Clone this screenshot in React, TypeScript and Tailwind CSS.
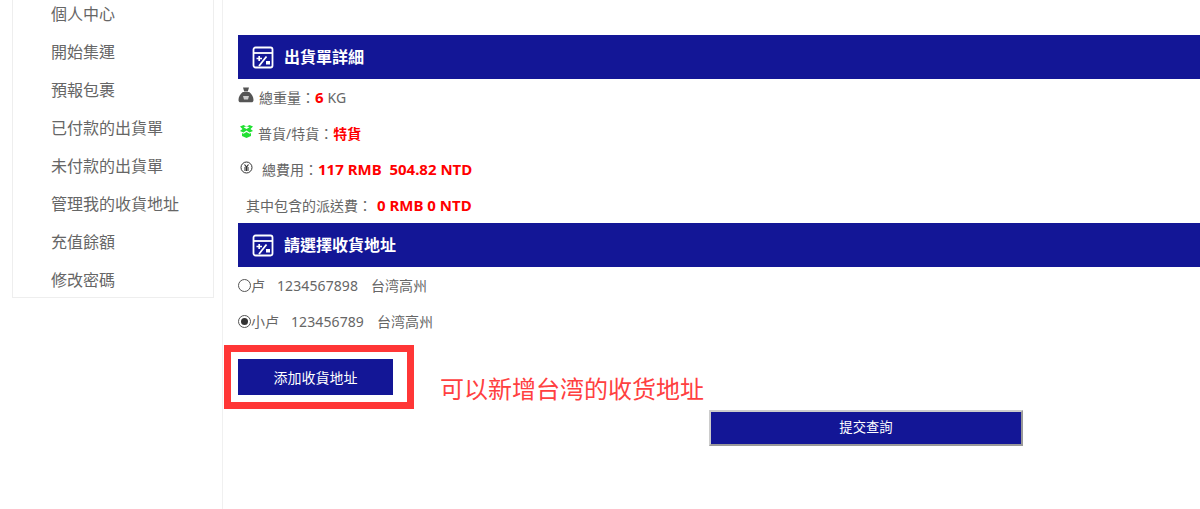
const font = "font-['Noto_Sans','Noto_Sans_CJK_TC',sans-serif]";

function CalcIcon() {
  return (
    <svg width="22" height="23" viewBox="0 0 22 23" fill="none" stroke="#fff" strokeWidth="1.8" className="shrink-0">
      <rect x="1.5" y="1.5" width="19" height="20" rx="2" />
      <path d="M1.5 7H20.500" />
      <path d="M4.500 12.500H10M7.200 10V15" strokeWidth="1.700" />
      <path d="M7 20L14.500 10.500" strokeWidth="1.800" />
      <rect x="14" y="15" width="4" height="3.500" fill="#fff" stroke="none" />
    </svg>
  );
}

function SectionHeader({ title }: { title: string }) {
  return (
    <div className="flex h-11 w-[962px] shrink-0 items-center gap-[10px] bg-[#131696] pl-[14px]">
      <CalcIcon />
      <span className="text-[16px] font-bold text-white">{title}</span>
    </div>
  );
}

const menu = ["個人中心", "開始集運", "預報包裹", "已付款的出貨單", "未付款的出貨單", "管理我的收貨地址", "充值餘額", "修改密碼"];

export default function App() {
  return (
    <div className={`flex h-[509px] w-[1200px] overflow-hidden bg-white text-[14px] text-[#666] ${font}`}>
      <aside className="w-[223px] shrink-0 border-r border-[#f0f0f0] pl-3">
        <ul className="-mt-[6px] h-[304px] w-[202px] border border-[#eeeeee] pl-[38px]">
          {menu.map((m) => (
            <li key={m} className="flex h-[38px] items-center text-[16px] leading-none text-[#666]">{m}</li>
          ))}
        </ul>
      </aside>
      <main className="flex min-w-0 flex-1 flex-col pl-[15px] pt-[35px]">
        <SectionHeader title="出貨單詳細" />
        <div className="flex h-9 items-center">
          <svg width="16" height="16" viewBox="0 0 16 16" className="mb-[4px] shrink-0">
            <path d="M5 .5h6L9.800 4.500H6.200zM4.800 5h6.400c2.800 2 4.300 5 4.300 8 0 1.500-.8 2.300-2.200 2.300H2.700C1.300 15.300.5 14.500.5 13c0-3 1.500-6 4.300-8z" fill="#555" />
            <path d="M5 9h6l-1 3.500H6z" fill="#ccc" />
          </svg>
          <span className="ml-[5px]">總重量：</span>
          <span className="text-[15px] font-bold text-[#ff0000]">6</span>
          <span className="ml-[4px]">KG</span>
        </div>
        <div className="flex h-9 items-center">
          <svg width="13" height="13" viewBox="0 0 13 13" className="mb-[4px] ml-[2px] shrink-0" fill="#22e033">
            <path d="M0 1.500 3.500 0l3 1.500L9.500 0 13 1.500 10.500 4 13 6 9.500 7.500l-3-2-3 2L0 6l2.500-2zM3.500 2.200 6.500 4l3-1.800-3-1z" />
            <path d="M2 8l1.500.8 3-1.800 3 1.800L11 8v3l-4.500 2L2 11z" />
          </svg>
          <span className="ml-[5px]">普貨/特貨：</span>
          <span className="font-bold text-[#ff0000]">特貨</span>
        </div>
        <div className="flex h-9 items-center">
          <svg width="13" height="13" viewBox="0 0 13 13" className="mb-[4px] ml-[2px] shrink-0" fill="none" stroke="#333">
            <circle cx="6.500" cy="6.500" r="5.500" />
            <path d="M4.500 3.500 6.500 6l2-2.500M4 7h5M4 9h5M6.500 6v4" strokeWidth="1.200" />
          </svg>
          <span className="ml-[9px]">總費用：</span>
          <span className="whitespace-pre text-[15px] font-bold text-[#ff0000]">117 RMB  504.82 NTD</span>
        </div>
        <div className="flex h-9 items-center pl-[8px]">
          <span>其中包含的派送費：</span>
          <span className="ml-[5px] text-[15px] font-bold text-[#ff0000]">0 RMB 0 NTD</span>
        </div>
        <SectionHeader title="請選擇收貨地址" />
        <label className="flex h-9 items-center">
          <span className="box-border h-[13px] w-[13px] rounded-full border border-[#555]" />
          <span>卢</span>
          <span className="ml-[12px] tracking-[0.1px]">1234567898</span>
          <span className="ml-[13px]">台湾高州</span>
        </label>
        <label className="flex h-9 items-center">
          <span className="box-border flex h-[13px] w-[13px] items-center justify-center rounded-full border border-[#555]">
            <span className="h-[7px] w-[7px] rounded-full bg-[#333]" />
          </span>
          <span>小卢</span>
          <span className="ml-[12px] tracking-[0.1px]">123456789</span>
          <span className="ml-[13px]">台湾高州</span>
        </label>
        <div className="relative mt-[6px] h-[64px] w-[190px] -translate-x-[14px] border-[7px] border-[#ff3636] p-[7px]">
          <button className="flex h-9 w-[155px] items-center justify-center bg-[#131696] text-[14px] text-white">添加收貨地址</button>
          <span className={"absolute left-[209px] top-[20px] whitespace-nowrap text-[24px] leading-8 text-[#ff4040] font-['Noto_Sans_CJK_SC',sans-serif]"}>可以新增台湾的收货地址</span>
        </div>
        <button className="ml-[471px] mt-[1px] flex h-9 w-[314px] items-center justify-center border-2 border-b-[#999] border-l-[#ccc] border-r-[#999] border-t-[#ccc] bg-[#131696] text-[13.333px] text-white">提交查詢</button>
      </main>
    </div>
  );
}
